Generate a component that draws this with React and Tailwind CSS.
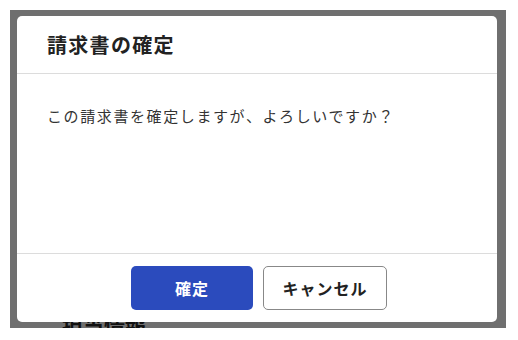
export default function App() {
  return (
    <div
      className="w-[518px] h-[340px] bg-white pt-[10px] pl-[10px]"
      style={{ fontFamily: '"Noto Sans CJK JP", "Noto Sans", sans-serif' }}
    >
      <div className="relative w-[496px] h-[318px] bg-[#6f6f6f] overflow-hidden pt-[6px] pl-[7px]">
        <div className="absolute left-[52px] top-[305px] text-[21px] font-bold text-[#111] leading-none">
          担当情報
        </div>
        <div className="relative w-[480px] h-[306px] bg-white rounded-[5px] flex flex-col">
          <div className="h-[58px] border-b border-[#dcdcdc] flex items-center px-[30px]">
            <h2 className="text-[20px] font-bold text-[#222] tracking-[1.3px]">請求書の確定</h2>
          </div>
          <div className="flex-1 px-[30px] pt-[31px]">
            <p className="text-[15px] text-[#333] tracking-[1.6px]">
              この請求書を確定しますが、よろしいですか？
            </p>
          </div>
          <div className="h-[69px] border-t border-[#dcdcdc] flex items-center justify-center gap-[10px] pl-[4px]">
            <button className="w-[122px] h-[44px] rounded-[5px] bg-[#2b4bbd] text-white text-[16px] font-bold tracking-[1px]">
              確定
            </button>
            <button className="w-[124px] h-[44px] rounded-[5px] border border-[#888] bg-white text-[#222] text-[16px] font-bold tracking-[1px]">
              キャンセル
            </button>
          </div>
        </div>
      </div>
    </div>
  );
}
